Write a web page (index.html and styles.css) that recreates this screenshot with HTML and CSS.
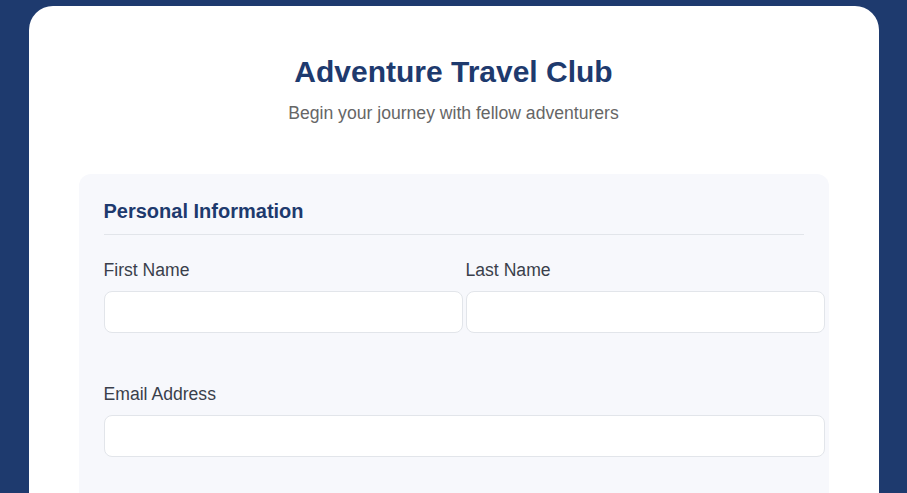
FILE: index.html
```html
<!DOCTYPE html>
<html lang="en">
<head>
<meta charset="utf-8">
<title>Adventure Travel Club</title>
<link rel="stylesheet" href="styles.css">
</head>
<body>
<div class="card">
  <header class="header">
    <h1 class="title">Adventure Travel Club</h1>
    <p class="subtitle">Begin your journey with fellow adventurers</p>
  </header>
  <section class="section">
    <h2 class="section-title">Personal Information</h2>
    <div class="row two">
      <div class="group">
        <label class="label" for="fn">First Name</label>
        <input class="input" id="fn" type="text">
      </div>
      <div class="group">
        <label class="label" for="ln">Last Name</label>
        <input class="input" id="ln" type="text">
      </div>
    </div>
    <div class="row">
      <div class="group">
        <label class="label" for="em">Email Address</label>
        <input class="input" id="em" type="email">
      </div>
    </div>
  </section>
</div>
</body>
</html>
```
FILE: styles.css
```css
html, body {
  margin: 0;
  padding: 0;
}
body {
  background: #1e3a6e;
  font-family: "Liberation Sans", Arial, sans-serif;
  padding-top: 6px;
  min-height: 100vh;
  box-sizing: border-box;
}
.card {
  background: #ffffff;
  max-width: 850px;
  margin: 0 auto;
  border-radius: 24px;
  padding: 48px 50px 40px;
  box-sizing: border-box;
  min-height: 600px;
}
.header {
  text-align: center;
  margin-bottom: 50px;
}
.title {
  margin: 0;
  font-size: 30px;
  line-height: 36px;
  font-weight: 700;
  color: #1e3a6e;
}
.subtitle {
  margin: 12px 0 0;
  font-size: 17.6px;
  line-height: 22px;
  color: #666666;
}
.section {
  background: #f7f8fc;
  border-radius: 12px;
  padding: 25px;
}
.section-title {
  margin: 0 0 25px;
  padding-bottom: 11px;
  border-bottom: 1px solid #e2e5ea;
  font-size: 20px;
  line-height: 24px;
  font-weight: 700;
  color: #1e3a6e;
}
.row {
  margin-bottom: 51px;
}
.row.two {
  display: grid;
  grid-template-columns: 1fr 1fr;
  column-gap: 24px;
}
.group {
  display: flex;
  flex-direction: column;
  align-items: flex-start;
  min-width: 0;
}
.label {
  font-size: 17.6px;
  line-height: 21px;
  color: #3a3f4b;
  margin-bottom: 10px;
}
.input {
  box-sizing: content-box;
  width: 100%;
  height: 20.8px;
  padding: 9.6px;
  margin: 0;
  border: 1px solid #e2e5ea;
  border-radius: 8px;
  background: #ffffff;
  font-family: inherit;
  font-size: 16px;
  outline: none;
}
```
